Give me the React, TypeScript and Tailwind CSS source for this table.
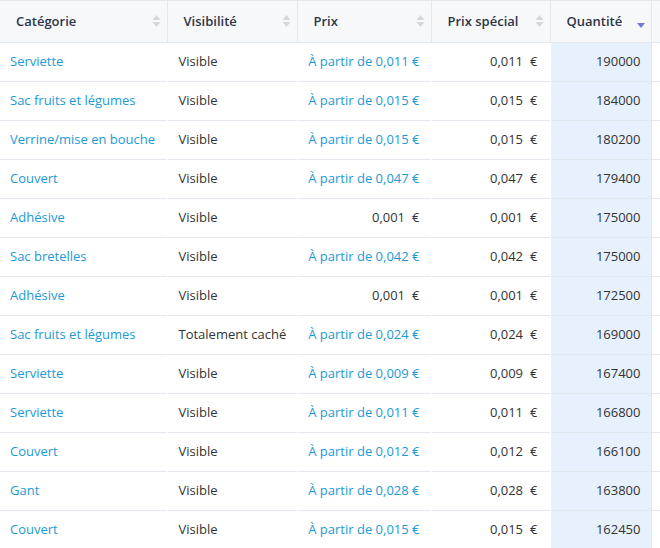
import { ReactNode } from "react"

type Row = {
  cat: string
  vis: string
  prix: string | null // null => plain price, same as special
  special: string
  qty: string
}

const rows: Row[] = [
  { cat: "Serviette", vis: "Visible", prix: "0,011", special: "0,011", qty: "190000" },
  { cat: "Sac fruits et légumes", vis: "Visible", prix: "0,015", special: "0,015", qty: "184000" },
  { cat: "Verrine/mise en bouche", vis: "Visible", prix: "0,015", special: "0,015", qty: "180200" },
  { cat: "Couvert", vis: "Visible", prix: "0,047", special: "0,047", qty: "179400" },
  { cat: "Adhésive", vis: "Visible", prix: null, special: "0,001", qty: "175000" },
  { cat: "Sac bretelles", vis: "Visible", prix: "0,042", special: "0,042", qty: "175000" },
  { cat: "Adhésive", vis: "Visible", prix: null, special: "0,001", qty: "172500" },
  { cat: "Sac fruits et légumes", vis: "Totalement caché", prix: "0,024", special: "0,024", qty: "169000" },
  { cat: "Serviette", vis: "Visible", prix: "0,009", special: "0,009", qty: "167400" },
  { cat: "Serviette", vis: "Visible", prix: "0,011", special: "0,011", qty: "166800" },
  { cat: "Couvert", vis: "Visible", prix: "0,012", special: "0,012", qty: "166100" },
  { cat: "Gant", vis: "Visible", prix: "0,028", special: "0,028", qty: "163800" },
  { cat: "Couvert", vis: "Visible", prix: "0,015", special: "0,015", qty: "162450" },
]

function SortIcon({ active = false }: { active?: boolean }) {
  if (active) {
    return (
      <svg width="10" height="14" viewBox="0 0 10 14" className="absolute right-[5px] top-[15px]">
        <path d="M1 7 L9 7 L5 12 Z" fill="#7478d8" />
      </svg>
    )
  }
  return (
    <svg width="9" height="14" viewBox="0 0 9 14" className="absolute right-[6px] top-[13px]">
      <path d="M0.5 6 L8.5 6 L4.5 1 Z" fill="#d4d7dc" />
      <path d="M0.5 8 L8.5 8 L4.5 13 Z" fill="#d4d7dc" />
    </svg>
  )
}

function Th({ children, active, className = "" }: { children?: ReactNode; active?: boolean; className?: string }) {
  return (
    <th
      className={`relative h-[42px] border-b border-r border-[#e3e8ef] bg-[#f7f8fa] px-4 text-left align-middle text-[13px] font-semibold whitespace-nowrap text-[#2d3648] ${className}`}
    >
      {children}
      {children ? <SortIcon active={active} /> : null}
    </th>
  )
}

function Price({ value }: { value: string }) {
  return (
    <span className="text-[#333]">
      {value}
      <span className="ml-[7px]">€</span>
    </span>
  )
}

export default function App() {
  return (
    <div className="h-[548px] w-[660px] overflow-hidden bg-white font-['Open_Sans','Noto_Sans',sans-serif]">
      <table className="w-[700px] table-fixed border-collapse">
        <colgroup>
          <col className="w-[167px]" />
          <col className="w-[130px]" />
          <col className="w-[134px]" />
          <col className="w-[119px]" />
          <col className="w-[101px]" />
          <col className="w-[49px]" />
        </colgroup>
        <thead>
          <tr className="border-t border-[#e3e8ef]">
            <Th>Catégorie</Th>
            <Th>Visibilité</Th>
            <Th>Prix</Th>
            <Th>Prix spécial</Th>
            <Th active>Quantité</Th>
            <Th />
          </tr>
        </thead>
        <tbody className="text-[13px]">
          {rows.map((r, i) => (
            <tr key={i} className="h-[39px] border-b border-[#e3e8ef]">
              <td className="border-r border-white px-[10px] whitespace-nowrap text-[#1b9ad6]">{r.cat}</td>
              <td className="border-r border-white px-[11px] whitespace-nowrap text-[#333]">{r.vis}</td>
              <td className="border-r border-white pr-[11px] text-right whitespace-nowrap">
                {r.prix ? (
                  <span className="text-[#1b9ad6]">À partir de {r.prix} €</span>
                ) : (
                  <Price value={r.special} />
                )}
              </td>
              <td className="border-r border-white pr-[12px] text-right whitespace-nowrap">
                <Price value={r.special} />
              </td>
              <td className="border-r border-[#e3e8ef] bg-[#e6f1fd] pr-[10px] text-right text-[#333]">{r.qty}</td>
              <td />
            </tr>
          ))}
        </tbody>
      </table>
    </div>
  )
}
